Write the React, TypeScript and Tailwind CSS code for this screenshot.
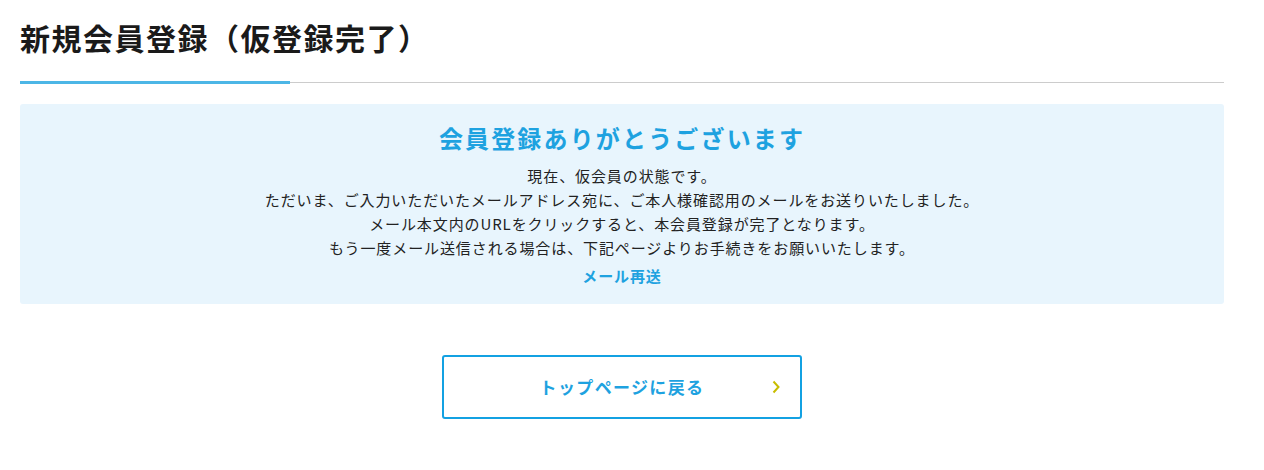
export default function App() {
  return (
    <div
      className="min-h-[470px] bg-white pl-5 pr-10 text-[#222]"
      style={{ fontFamily: '"Noto Sans CJK JP", "Noto Sans", sans-serif' }}
    >
      <div className="relative mt-[14px] border-b border-[#cccccc] pb-[22px]">
        <h1 className="text-[30px] font-bold leading-[46px] tracking-[0.05em] text-[#1a1a1a]">
          新規会員登録（仮登録完了）
        </h1>
        <span className="absolute bottom-[-2px] left-0 h-[3px] w-[270px] bg-[#4cb6e6]"></span>
      </div>

      <div className="mt-[21px] rounded-[3px] bg-[#e8f5fd] py-4 text-center">
        <h2 className="mb-2 text-[24px] font-bold leading-[36px] tracking-[0.09em] text-[#1ea2e0]">
          会員登録ありがとうございます
        </h2>
        <p className="text-[15px] leading-[24px] tracking-[0.06em]">
          現在、仮会員の状態です。
          <br />
          ただいま、ご入力いただいたメールアドレス宛に、ご本人様確認用のメールをお送りいたしました。
          <br />
          メール本文内のURLをクリックすると、本会員登録が完了となります。
          <br />
          もう一度メール送信される場合は、下記ページよりお手続きをお願いいたします。
        </p>
        <a
          href="#"
          className="mt-1 block text-[15px] font-bold leading-[24px] tracking-[0.06em] text-[#1ea2e0]"
        >
          メール再送
        </a>
      </div>

      <div className="mt-[51px] flex justify-center">
        <a
          href="#"
          className="relative flex h-[64px] w-[360px] items-center justify-center rounded-[3px] border-2 border-[#13a1e2] text-[17px] font-bold tracking-[0.08em] text-[#1ea2e0]"
        >
          トップページに戻る
          <svg
            className="absolute right-[19px] top-1/2 -translate-y-1/2"
            width="10"
            height="14"
            viewBox="0 0 10 14"
            fill="none"
          >
            <path d="M2.5 1.5 L7.5 7 L2.5 12.5" stroke="#c8bd00" strokeWidth="2" />
          </svg>
        </a>
      </div>
    </div>
  )
}
